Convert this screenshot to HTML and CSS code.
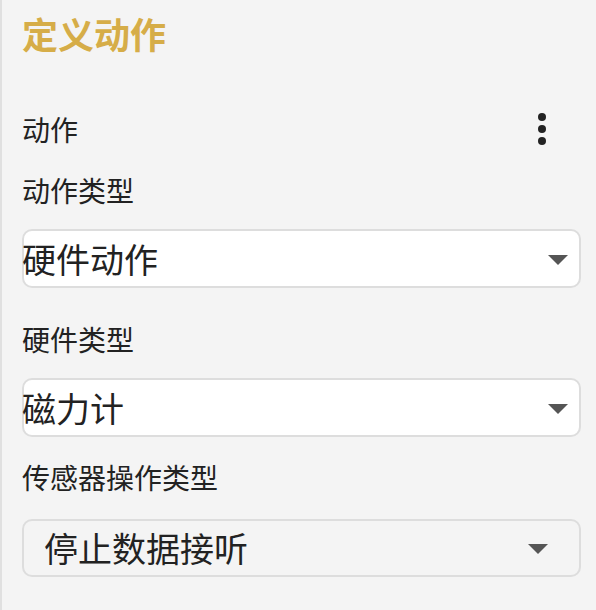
FILE: index.html
```html
<!DOCTYPE html>
<html lang="zh-CN">
<head>
  <meta charset="UTF-8">
  <meta name="viewport" content="width=device-width, initial-scale=1.0">
  <title>定义动作</title>
  <link rel="stylesheet" href="styles.css">
</head>
<body>
  <div class="panel">
    <h1 class="title">定义动作</h1>

    <div class="action-row">
      <span class="label">动作</span>
      <svg class="more-btn" width="8" height="32" viewBox="0 0 8 32">
        <circle cx="4" cy="4" r="4" fill="#222"/>
        <circle cx="4" cy="16" r="4" fill="#222"/>
        <circle cx="4" cy="28" r="4" fill="#222"/>
      </svg>
    </div>

    <div class="field first">
      <div class="label">动作类型</div>
      <div class="dropdown">
        <span class="value">硬件动作</span>
        <span class="arrow"></span>
      </div>
    </div>

    <div class="field second">
      <div class="label">硬件类型</div>
      <div class="dropdown">
        <span class="value">磁力计</span>
        <span class="arrow"></span>
      </div>
    </div>

    <div class="field third">
      <div class="label">传感器操作类型</div>
      <div class="dropdown inset">
        <span class="value">停止数据接听</span>
        <span class="arrow"></span>
      </div>
    </div>
  </div>
</body>
</html>
```

FILE: styles.css
```css
* {
  margin: 0;
  padding: 0;
  box-sizing: border-box;
  font-family: 'Noto Sans CJK SC', 'Noto Sans', sans-serif;
}
html, body {
  height: 100%;
}
body {
  background: #f4f4f4;
  border-left: 2px solid #e0e0e0;
  color: #222;
}
.panel {
  padding: 15px 15px 0 20px;
}
.title {
  font-size: 36px;
  line-height: 36px;
  font-weight: bold;
  color: #d6ad48;
}
.label {
  font-size: 28px;
  line-height: 28px;
}
.action-row {
  display: flex;
  align-items: center;
  justify-content: space-between;
  margin-top: 62px;
  padding-right: 35px;
}
.more-btn {
  display: block;
}
.field .label {
  margin-bottom: 25px;
}
.field.first {
  margin-top: 31px;
}
.field.second {
  margin-top: 37px;
}
.field.third {
  margin-top: 26px;
}
.field.third .label {
  margin-bottom: 28px;
}
.dropdown {
  display: flex;
  align-items: center;
  justify-content: space-between;
  height: 59px;
  padding: 0 11px 0 0;
  background: #fff;
  border: 2px solid #dddddd;
  border-radius: 10px;
}
.dropdown .value {
  font-size: 34px;
  line-height: 34px;
  margin-left: -2px;
}
.arrow {
  width: 0;
  height: 0;
  margin-top: 2px;
  border-left: 10px solid transparent;
  border-right: 10px solid transparent;
  border-top: 10px solid #555;
}
.dropdown.inset {
  height: 58px;
  background: #f4f4f4;
  padding: 0 31px 0 20px;
}
.dropdown.inset .value {
  margin-left: 0;
}
```
